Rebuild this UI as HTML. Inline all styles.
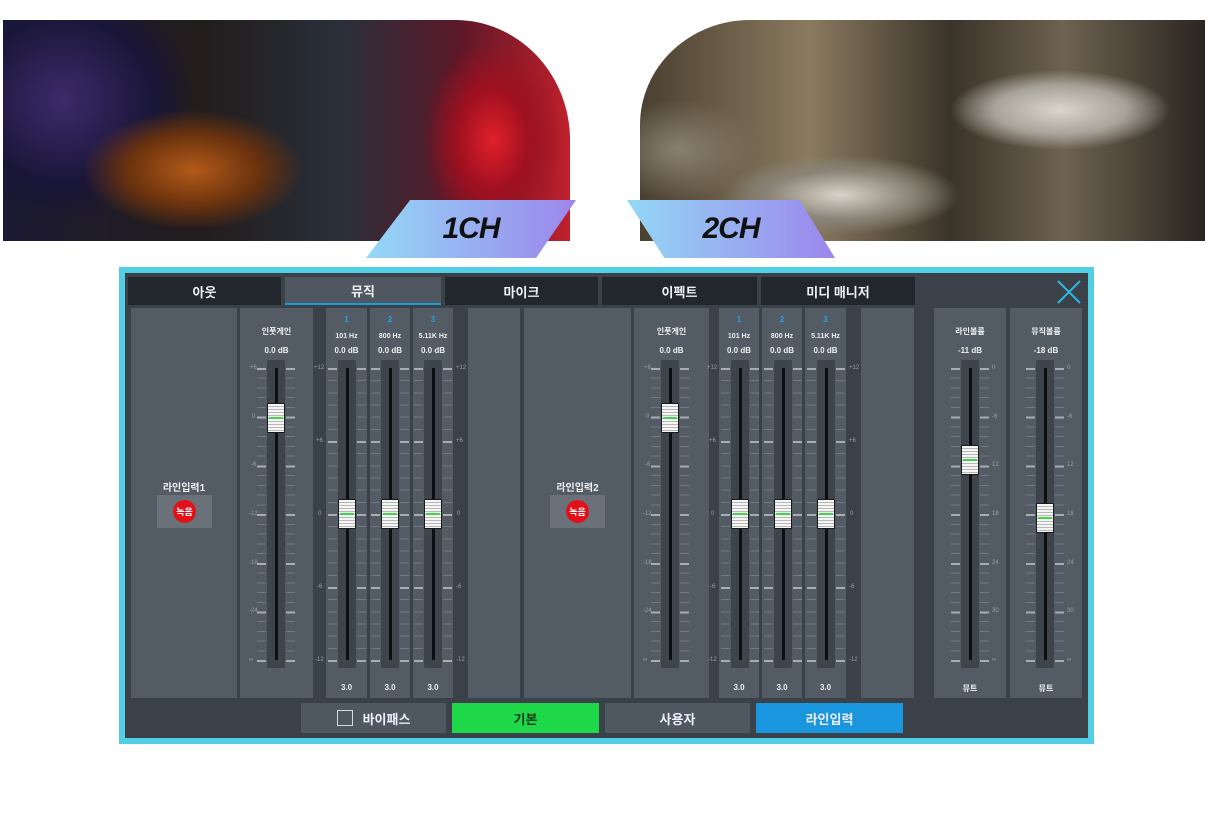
<!DOCTYPE html>
<html><head><meta charset="utf-8">
<style>
*{margin:0;padding:0;box-sizing:border-box}
body{width:1208px;height:818px;background:#fff;position:relative;overflow:hidden;font-family:"Liberation Sans","Noto Sans CJK KR",sans-serif}
.a{position:absolute}
.p1{left:3px;top:20px;width:567px;height:221px;border-radius:0 115px 0 0/0 120px 0 0;overflow:hidden;
background:radial-gradient(ellipse 110px 60px at 190px 150px,#b35a18 0,#6a320e 60%,transparent 100%),
radial-gradient(ellipse 70px 100px at 490px 120px,#e0202a 0,#a01020 50%,transparent 100%),
radial-gradient(ellipse 130px 120px at 60px 80px,#3b2a6a 0,#1a1638 70%,transparent 100%),
linear-gradient(90deg,#1c1a33 0,#221c1c 35%,#2a303a 60%,#5a1828 80%,#c0202c 100%)}
.p2{left:640px;top:20px;width:565px;height:221px;border-radius:110px 0 0 0/105px 0 0 0;overflow:hidden;
background:radial-gradient(ellipse 110px 40px at 420px 90px,#d9d6cf 0,#a8a39a 60%,transparent 100%),
radial-gradient(ellipse 120px 40px at 200px 175px,#d8d2c8 0,#8a8478 60%,transparent 100%),
radial-gradient(ellipse 80px 50px at 40px 130px,#8a8070 0,transparent 100%),
linear-gradient(90deg,#4a4030 0,#8a7a60 30%,#3a3328 55%,#6e6250 75%,#2a2620 100%)}
.band{top:200px;height:58px;background:linear-gradient(90deg,#94d8f6,#9c86ec);display:flex;align-items:center;justify-content:center;font:italic 900 30px "Liberation Sans",sans-serif;color:#111;letter-spacing:-1px}
.panel{left:119px;top:267px;width:975px;height:477px;background:#3a4148;border:6px solid #52cfe4}
.tab{top:277px;height:28px;background:#22272d;color:#eef0f2;font-size:13px;font-weight:bold;display:flex;align-items:center;justify-content:center}
.col{top:308px;height:390px;background:#535b64}
.t{color:#eef0f2;font-size:8px;font-weight:bold;text-align:center}
.s{color:#98a0a8;font-size:6px}
.fad{position:absolute;top:360px;width:60px;height:310px;margin-left:-30px}
.slot{position:absolute;left:21px;width:18px;top:0;height:308px;background:#3d444b;border-radius:2px}
.ln{position:absolute;left:29px;width:3px;top:8px;height:292px;background:#0c0e10}
.tk{position:absolute;top:8px;height:294px;width:9px}
.kn{position:absolute;left:21px;width:18px;height:30px;background:repeating-linear-gradient(#f4f4f4 0 2px,#b8b8b8 2px 3px);border:1px solid #1a1a1a;border-radius:1px}
.kn:after{content:"";position:absolute;left:1px;right:1px;top:13px;height:2px;background:#3fd64a}
.btn{top:703px;height:30px;display:flex;align-items:center;justify-content:center;color:#eef;font-size:13px;font-weight:bold}
</style></head><body>
<div class="a p1"></div>
<div class="a p2"></div>
<div class="a band" style="left:366px;width:210px;clip-path:polygon(21% 0,100% 0,81% 100%,0 100%)">1CH</div>
<div class="a band" style="left:627px;width:208px;clip-path:polygon(0 0,83% 0,100% 100%,18% 100%)">2CH</div>

<div class="a panel"></div>
<div class="a tab" style="left:128px;width:153px">아웃</div>
<div class="a tab" style="left:285px;width:156px;background:#4f5760;border-bottom:2px solid #1c9ad6">뮤직</div>
<div class="a tab" style="left:445px;width:153px">마이크</div>
<div class="a tab" style="left:602px;width:155px">이펙트</div>
<div class="a tab" style="left:761px;width:154px">미디 매니저</div>
<svg class="a" style="left:1056px;top:279px" width="26" height="26"><path d="M2 2L24 24M24 2L2 24" stroke="#2fb7de" stroke-width="2"/></svg>

<div class="a col" style="left:131px;width:106px"></div>
<div class="a col" style="left:240px;width:73px"></div>
<div class="a col" style="left:326px;width:41px"></div>
<div class="a col" style="left:370px;width:40px"></div>
<div class="a col" style="left:413px;width:40px"></div>
<div class="a col" style="left:468px;width:52px"></div>
<div class="a col" style="left:524px;width:107px"></div>
<div class="a col" style="left:634px;width:75px"></div>
<div class="a col" style="left:719px;width:40px"></div>
<div class="a col" style="left:762px;width:40px"></div>
<div class="a col" style="left:805px;width:41px"></div>
<div class="a col" style="left:861px;width:53px"></div>
<div class="a col" style="left:934px;width:72px"></div>
<div class="a col" style="left:1010px;width:72px"></div>

<div class="a t" style="left:131px;width:106px;top:479px;font-size:10px">라인입력1</div>
<div class="a" style="left:157px;top:495px;width:55px;height:33px;background:#6a7179"></div>
<div class="a" style="left:173px;top:500px;width:23px;height:23px;border-radius:50%;background:#e3101a;color:#fff;font-size:9px;font-weight:bold;display:flex;align-items:center;justify-content:center">녹음</div>
<div class="a t" style="left:524px;width:107px;top:479px;font-size:10px">라인입력2</div>
<div class="a" style="left:550px;top:495px;width:55px;height:33px;background:#6a7179"></div>
<div class="a" style="left:566px;top:500px;width:23px;height:23px;border-radius:50%;background:#e3101a;color:#fff;font-size:9px;font-weight:bold;display:flex;align-items:center;justify-content:center">녹음</div>

<div class="a t" style="left:240px;width:73px;top:326px">인풋게인</div>
<div class="a t" style="left:240px;width:73px;top:346px">0.0 dB</div>
<div class="a t" style="left:634px;width:75px;top:326px">인풋게인</div>
<div class="a t" style="left:634px;width:75px;top:346px">0.0 dB</div>
<div class="a t" style="left:326px;width:41px;top:315px;color:#2aa3e0">1</div>
<div class="a t" style="left:370px;width:40px;top:315px;color:#2aa3e0">2</div>
<div class="a t" style="left:413px;width:40px;top:315px;color:#2aa3e0">3</div>
<div class="a t" style="left:326px;width:41px;top:333px;font-size:7px">101 Hz</div>
<div class="a t" style="left:370px;width:40px;top:333px;font-size:7px">800 Hz</div>
<div class="a t" style="left:413px;width:40px;top:333px;font-size:7px">5.11K Hz</div>
<div class="a t" style="left:719px;width:40px;top:315px;color:#2aa3e0">1</div>
<div class="a t" style="left:762px;width:40px;top:315px;color:#2aa3e0">2</div>
<div class="a t" style="left:805px;width:41px;top:315px;color:#2aa3e0">3</div>
<div class="a t" style="left:719px;width:40px;top:333px;font-size:7px">101 Hz</div>
<div class="a t" style="left:762px;width:40px;top:333px;font-size:7px">800 Hz</div>
<div class="a t" style="left:805px;width:41px;top:333px;font-size:7px">5.11K Hz</div>
<div class="a t" style="left:326px;width:41px;top:346px">0.0 dB</div>
<div class="a t" style="left:370px;width:40px;top:346px">0.0 dB</div>
<div class="a t" style="left:413px;width:40px;top:346px">0.0 dB</div>
<div class="a t" style="left:719px;width:40px;top:346px">0.0 dB</div>
<div class="a t" style="left:762px;width:40px;top:346px">0.0 dB</div>
<div class="a t" style="left:805px;width:41px;top:346px">0.0 dB</div>
<div class="a t" style="left:326px;width:41px;top:683px">3.0</div>
<div class="a t" style="left:370px;width:40px;top:683px">3.0</div>
<div class="a t" style="left:413px;width:40px;top:683px">3.0</div>
<div class="a t" style="left:719px;width:40px;top:683px">3.0</div>
<div class="a t" style="left:762px;width:40px;top:683px">3.0</div>
<div class="a t" style="left:805px;width:41px;top:683px">3.0</div>
<div class="a t" style="left:934px;width:72px;top:326px">라인볼륨</div>
<div class="a t" style="left:934px;width:72px;top:346px">-11 dB</div>
<div class="a t" style="left:1010px;width:72px;top:326px">뮤직볼륨</div>
<div class="a t" style="left:1010px;width:72px;top:346px">-18 dB</div>
<div class="a t" style="left:934px;width:72px;top:683px">뮤트</div>
<div class="a t" style="left:1010px;width:72px;top:683px">뮤트</div>

<div class="fad" style="left:276px"><div class="slot"></div><div class="ln"></div>
<div class="tk" style="left:11px;background:repeating-linear-gradient(#a7adb3 0 2px,transparent 2px 48.7px),repeating-linear-gradient(#737a81 0 1px,transparent 1px 9.74px)"></div>
<div class="tk" style="left:40px;background:repeating-linear-gradient(#a7adb3 0 2px,transparent 2px 48.7px),repeating-linear-gradient(#737a81 0 1px,transparent 1px 9.74px)"></div>
<div class="kn" style="top:43px"></div></div>
<div class="fad" style="left:670px"><div class="slot"></div><div class="ln"></div>
<div class="tk" style="left:11px;background:repeating-linear-gradient(#a7adb3 0 2px,transparent 2px 48.7px),repeating-linear-gradient(#737a81 0 1px,transparent 1px 9.74px)"></div>
<div class="tk" style="left:40px;background:repeating-linear-gradient(#a7adb3 0 2px,transparent 2px 48.7px),repeating-linear-gradient(#737a81 0 1px,transparent 1px 9.74px)"></div>
<div class="kn" style="top:43px"></div></div>
<div class="a s" style="left:250px;top:365px">+6</div><div class="a s" style="left:252px;top:414px">0</div><div class="a s" style="left:251px;top:462px">-6</div><div class="a s" style="left:249px;top:511px">-12</div><div class="a s" style="left:249px;top:560px">-18</div><div class="a s" style="left:249px;top:608px">-24</div><div class="a s" style="left:249px;top:657px">∞</div>
<div class="a s" style="left:644px;top:365px">+6</div><div class="a s" style="left:646px;top:414px">0</div><div class="a s" style="left:645px;top:462px">-6</div><div class="a s" style="left:643px;top:511px">-12</div><div class="a s" style="left:643px;top:560px">-18</div><div class="a s" style="left:643px;top:608px">-24</div><div class="a s" style="left:643px;top:657px">∞</div>

<div class="fad" style="left:347px"><div class="slot"></div><div class="ln"></div><div class="tk" style="left:11px;background:repeating-linear-gradient(#a7adb3 0 2px,transparent 2px 73px),repeating-linear-gradient(#737a81 0 1px,transparent 1px 12.17px)"></div><div class="tk" style="left:40px;background:repeating-linear-gradient(#a7adb3 0 2px,transparent 2px 73px),repeating-linear-gradient(#737a81 0 1px,transparent 1px 12.17px)"></div><div class="kn" style="top:139px"></div></div>
<div class="fad" style="left:390px"><div class="slot"></div><div class="ln"></div><div class="tk" style="left:11px;background:repeating-linear-gradient(#a7adb3 0 2px,transparent 2px 73px),repeating-linear-gradient(#737a81 0 1px,transparent 1px 12.17px)"></div><div class="tk" style="left:40px;background:repeating-linear-gradient(#a7adb3 0 2px,transparent 2px 73px),repeating-linear-gradient(#737a81 0 1px,transparent 1px 12.17px)"></div><div class="kn" style="top:139px"></div></div>
<div class="fad" style="left:433px"><div class="slot"></div><div class="ln"></div><div class="tk" style="left:11px;background:repeating-linear-gradient(#a7adb3 0 2px,transparent 2px 73px),repeating-linear-gradient(#737a81 0 1px,transparent 1px 12.17px)"></div><div class="tk" style="left:40px;background:repeating-linear-gradient(#a7adb3 0 2px,transparent 2px 73px),repeating-linear-gradient(#737a81 0 1px,transparent 1px 12.17px)"></div><div class="kn" style="top:139px"></div></div>
<div class="fad" style="left:740px"><div class="slot"></div><div class="ln"></div><div class="tk" style="left:11px;background:repeating-linear-gradient(#a7adb3 0 2px,transparent 2px 73px),repeating-linear-gradient(#737a81 0 1px,transparent 1px 12.17px)"></div><div class="tk" style="left:40px;background:repeating-linear-gradient(#a7adb3 0 2px,transparent 2px 73px),repeating-linear-gradient(#737a81 0 1px,transparent 1px 12.17px)"></div><div class="kn" style="top:139px"></div></div>
<div class="fad" style="left:783px"><div class="slot"></div><div class="ln"></div><div class="tk" style="left:11px;background:repeating-linear-gradient(#a7adb3 0 2px,transparent 2px 73px),repeating-linear-gradient(#737a81 0 1px,transparent 1px 12.17px)"></div><div class="tk" style="left:40px;background:repeating-linear-gradient(#a7adb3 0 2px,transparent 2px 73px),repeating-linear-gradient(#737a81 0 1px,transparent 1px 12.17px)"></div><div class="kn" style="top:139px"></div></div>
<div class="fad" style="left:826px"><div class="slot"></div><div class="ln"></div><div class="tk" style="left:11px;background:repeating-linear-gradient(#a7adb3 0 2px,transparent 2px 73px),repeating-linear-gradient(#737a81 0 1px,transparent 1px 12.17px)"></div><div class="tk" style="left:40px;background:repeating-linear-gradient(#a7adb3 0 2px,transparent 2px 73px),repeating-linear-gradient(#737a81 0 1px,transparent 1px 12.17px)"></div><div class="kn" style="top:139px"></div></div>
<div class="a s" style="left:314px;top:365px">+12</div><div class="a s" style="left:316px;top:438px">+6</div><div class="a s" style="left:318px;top:511px">0</div><div class="a s" style="left:317px;top:584px">-6</div><div class="a s" style="left:315px;top:657px">-12</div>
<div class="a s" style="left:456px;top:365px">+12</div><div class="a s" style="left:456px;top:438px">+6</div><div class="a s" style="left:457px;top:511px">0</div><div class="a s" style="left:456px;top:584px">-6</div><div class="a s" style="left:456px;top:657px">-12</div>
<div class="a s" style="left:707px;top:365px">+12</div><div class="a s" style="left:709px;top:438px">+6</div><div class="a s" style="left:711px;top:511px">0</div><div class="a s" style="left:710px;top:584px">-6</div><div class="a s" style="left:708px;top:657px">-12</div>
<div class="a s" style="left:849px;top:365px">+12</div><div class="a s" style="left:849px;top:438px">+6</div><div class="a s" style="left:850px;top:511px">0</div><div class="a s" style="left:849px;top:584px">-6</div><div class="a s" style="left:849px;top:657px">-12</div>

<div class="fad" style="left:970px"><div class="slot"></div><div class="ln"></div><div class="tk" style="left:11px;background:repeating-linear-gradient(#a7adb3 0 2px,transparent 2px 48.7px),repeating-linear-gradient(#737a81 0 1px,transparent 1px 9.74px)"></div><div class="tk" style="left:40px;background:repeating-linear-gradient(#a7adb3 0 2px,transparent 2px 48.7px),repeating-linear-gradient(#737a81 0 1px,transparent 1px 9.74px)"></div><div class="kn" style="top:85px"></div></div>
<div class="fad" style="left:1045px"><div class="slot"></div><div class="ln"></div><div class="tk" style="left:11px;background:repeating-linear-gradient(#a7adb3 0 2px,transparent 2px 48.7px),repeating-linear-gradient(#737a81 0 1px,transparent 1px 9.74px)"></div><div class="tk" style="left:40px;background:repeating-linear-gradient(#a7adb3 0 2px,transparent 2px 48.7px),repeating-linear-gradient(#737a81 0 1px,transparent 1px 9.74px)"></div><div class="kn" style="top:143px"></div></div>
<div class="a s" style="left:992px;top:365px">0</div><div class="a s" style="left:992px;top:414px">-6</div><div class="a s" style="left:992px;top:462px">12</div><div class="a s" style="left:992px;top:511px">18</div><div class="a s" style="left:992px;top:560px">24</div><div class="a s" style="left:992px;top:608px">30</div><div class="a s" style="left:992px;top:657px">∞</div>
<div class="a s" style="left:1067px;top:365px">0</div><div class="a s" style="left:1067px;top:414px">-6</div><div class="a s" style="left:1067px;top:462px">12</div><div class="a s" style="left:1067px;top:511px">18</div><div class="a s" style="left:1067px;top:560px">24</div><div class="a s" style="left:1067px;top:608px">30</div><div class="a s" style="left:1067px;top:657px">∞</div>

<div class="a btn" style="left:301px;width:145px;background:#4f5760"><span style="display:inline-block;width:16px;height:16px;border:1.5px solid #d8dade;margin-right:10px"></span>바이패스</div>
<div class="a btn" style="left:452px;width:147px;background:#1ed84a;color:#0f3a1a">기본</div>
<div class="a btn" style="left:605px;width:145px;background:#4f5760">사용자</div>
<div class="a btn" style="left:756px;width:147px;background:#1a96de">라인입력</div>
</body></html>
